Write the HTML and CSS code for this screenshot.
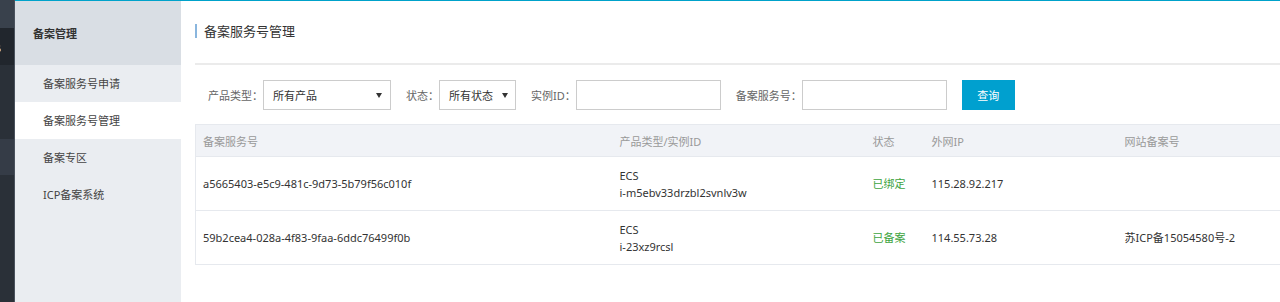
FILE: index.html
```html
<!DOCTYPE html>
<html lang="zh-CN">
<head>
<meta charset="utf-8">
<title>备案服务号管理</title>
<link rel="stylesheet" href="styles.css">
</head>
<body>
<div class="app">
  <div class="rail">
    <div class="rail-a"></div>
    <div class="rail-b">
      <svg class="rail-icon" width="10" height="10" viewBox="0 0 10 10"><circle cx="3" cy="3" r="2.2" fill="#c9a27e"/><rect x="0" y="5.5" width="6" height="3" rx="1" fill="#c9a27e"/></svg>
    </div>
    <div class="rail-c"></div>
    <div class="rail-d"></div>
    <div class="rail-e"></div>
  </div>
  <div class="shell">
    <aside class="sidebar">
      <div class="side-head">备案管理</div>
      <ul class="menu">
        <li class="menu-item">备案服务号申请</li>
        <li class="menu-item active">备案服务号管理</li>
        <li class="menu-item">备案专区</li>
        <li class="menu-item">ICP备案系统</li>
      </ul>
    </aside>
    <main class="main">
      <div class="page-head"><h1 class="title">备案服务号管理</h1></div>
      <form class="filters">
        <label class="lbl">产品类型：</label>
        <div class="select sel-product"><span>所有产品</span><i class="caret"></i></div>
        <label class="lbl">状态：</label>
        <div class="select sel-status"><span>所有状态</span><i class="caret"></i></div>
        <label class="lbl">实例ID：</label>
        <input class="txt" type="text">
        <label class="lbl">备案服务号：</label>
        <input class="txt" type="text">
        <button class="btn" type="button">查询</button>
      </form>
      <table class="grid">
        <colgroup>
          <col class="c1"><col class="c2"><col class="c3"><col class="c4"><col>
        </colgroup>
        <thead>
          <tr><th>备案服务号</th><th>产品类型/实例ID</th><th>状态</th><th>外网IP</th><th>网站备案号</th></tr>
        </thead>
        <tbody>
          <tr>
            <td>a5665403-e5c9-481c-9d73-5b79f56c010f</td>
            <td>ECS<br>i-m5ebv33drzbl2svnlv3w</td>
            <td class="ok">已绑定</td>
            <td>115.28.92.217</td>
            <td></td>
          </tr>
          <tr>
            <td>59b2cea4-028a-4f83-9faa-6ddc76499f0b</td>
            <td>ECS<br>i-23xz9rcsl</td>
            <td class="ok">已备案</td>
            <td>114.55.73.28</td>
            <td>苏ICP备15054580号-2</td>
          </tr>
        </tbody>
      </table>
    </main>
  </div>
</div>
</body>
</html>
```

FILE: styles.css
```css
* { box-sizing: border-box; }
html, body { margin: 0; padding: 0; }
body {
  width: 1280px;
  height: 302px;
  overflow: hidden;
  background: #fff;
  font-family: "Noto Sans", "Noto Sans CJK SC", sans-serif;
  font-size: 11px;
  color: #333;
}
.app { display: flex; height: 302px; }

.rail {
  width: 15px;
  flex: none;
  display: flex;
  flex-direction: column;
  border-right: 1px solid #4a525d;
  background: #2a3038;
  overflow: hidden;
}
.rail-a { height: 28px; background: #39414c; }
.rail-b { height: 37px; background: #21262d; display: flex; align-items: center; }
.rail-icon { margin-left: -5px; margin-top: 2px; }
.rail-c { height: 74px; background: #2a3038; }
.rail-d { height: 36px; background: #353c47; }
.rail-e { flex: 1; background: #2a3038; }

.shell {
  flex: 1;
  display: flex;
  border-top: 1px solid #00a2ca;
  min-width: 0;
}

.sidebar {
  width: 166px;
  flex: none;
  background: #eaedf1;
}
.side-head {
  height: 64px;
  background: #d9dee4;
  padding-left: 18px;
  display: flex;
  align-items: center;
  font-weight: bold;
  font-size: 11px;
  color: #333;
}
.menu { list-style: none; margin: 0; padding: 0; }
.menu-item {
  height: 37px;
  line-height: 37px;
  padding-left: 28px;
  color: #444;
}
.menu-item.active { background: #fff; }

.main {
  flex: 1;
  min-width: 0;
  padding-left: 14px;
}
.page-head {
  height: 64px;
  border-bottom: 2px solid #ebebeb;
  padding-top: 23px;
}
.title {
  margin: 0;
  font-size: 13px;
  font-weight: normal;
  line-height: 14px;
  border-left: 2px solid #8ab6de;
  padding-left: 7px;
  color: #333;
}

.filters {
  margin: 15px 0 0 0;
  padding-left: 13px;
  display: flex;
  align-items: center;
  height: 30px;
}
.lbl { color: #666; white-space: nowrap; }
.select {
  height: 30px;
  border: 1px solid #ccc;
  display: flex;
  align-items: center;
  justify-content: space-between;
  padding: 0 8px 0 9px;
  color: #333;
  margin-right: 15px;
}
.sel-product { width: 128px; }
.sel-status { width: 77px; padding-right: 7px; }
.caret {
  width: 0; height: 0;
  border-left: 3px solid transparent;
  border-right: 3px solid transparent;
  border-top: 5px solid #333;
}
.txt {
  width: 145px;
  height: 30px;
  border: 1px solid #ccc;
  margin: 0 15px 0 0;
  padding: 0 6px;
  font: inherit;
  outline: none;
}
.btn {
  width: 53px;
  height: 30px;
  border: none;
  background: #00a0cf;
  color: #fff;
  font: inherit;
  padding: 0;
}

.grid {
  margin-top: 14px;
  width: calc(100% + 10px);
  border-collapse: collapse;
  table-layout: fixed;
  border-left: 1px solid #e6e9ee;
  border-top: 1px solid #e6e9ee;
}
.c1 { width: 417px; }
.c2 { width: 253px; }
.c3 { width: 59px; }
.c4 { width: 193px; }
.grid th {
  height: 32px;
  background: #f1f3f7;
  text-align: left;
  font-weight: normal;
  color: #999;
  padding: 0 0 0 7px;
  border-bottom: 1px solid #e6e9ee;
}
.grid td {
  height: 54px;
  padding: 0 0 0 7px;
  line-height: 17px;
  vertical-align: middle;
  border-bottom: 1px solid #e6e9ee;
  color: #333;
}
.grid td.ok { color: #3ea43f; }
```
